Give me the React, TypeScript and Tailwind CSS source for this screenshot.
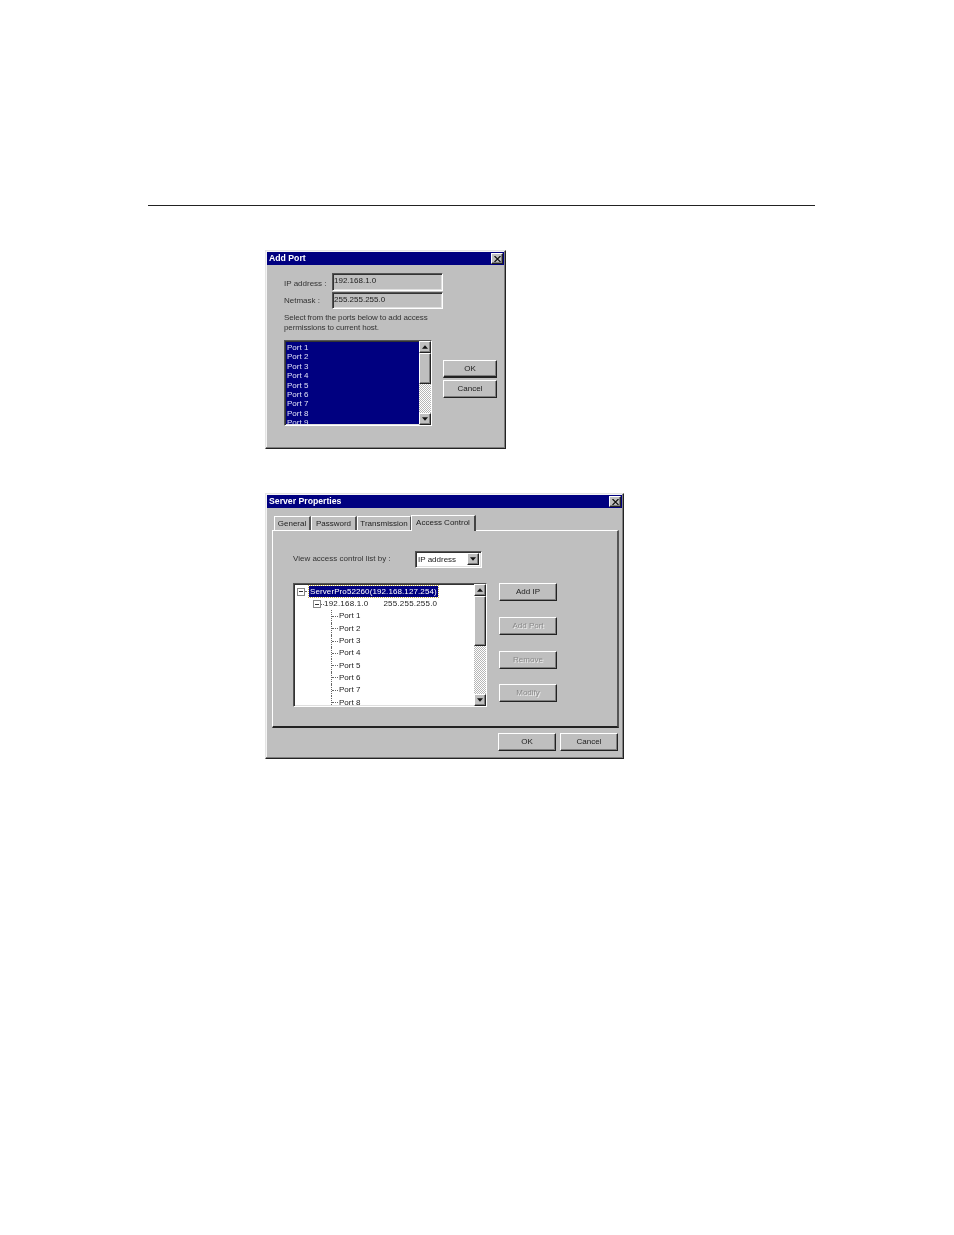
import type { ReactNode } from "react";

const raised = "border border-t-white border-l-white border-r-[#222] border-b-[#222] shadow-[inset_-1px_-1px_0_#7f7f7f]";
const sunken = "border border-t-[#555] border-l-[#555] border-r-white border-b-white shadow-[inset_1px_1px_0_#333,inset_-1px_-1px_0_#dfdfdf]";
const dither = "bg-[repeating-conic-gradient(#ffffff_0_25%,#b5b5b5_0_50%)] bg-[length:2px_2px]";
const tab = "flex items-center justify-center border-t border-l border-t-white border-l-white";

const Btn = ({ label, className = "", disabled = false, strong = false }: { label: string; className?: string; disabled?: boolean; strong?: boolean }) => (
  <div
    className={`flex items-center justify-center bg-[#bfbfbf] ${raised} ${strong ? "border-[#111] border-t-[#111] border-l-[#111] border-b-2" : ""} ${
      disabled ? "text-[#8a8a8a] [text-shadow:1px_1px_0_#eee]" : "text-[#222]"
    } ${className}`}
  >
    {label}
  </div>
);

const Arrow = ({ up = false }: { up?: boolean }) => (
  <div className={`flex h-[12px] w-[12px] shrink-0 items-center justify-center bg-[#bfbfbf] ${raised}`}>
    <svg width="6" height="4" viewBox="0 0 7 4">
      <path d={up ? "M3.5 0L7 4H0Z" : "M0 0H7L3.5 4Z"} fill="#111" />
    </svg>
  </div>
);

const Scrollbar = ({ thumb }: { thumb: string }) => (
  <div className={`flex h-full w-[12px] shrink-0 flex-col ${dither}`}>
    <Arrow up />
    <div className={`w-[12px] bg-[#bfbfbf] ${raised} ${thumb}`} />
    <div className="flex-1" />
    <Arrow />
  </div>
);

const Window = ({ title, className, children }: { title: string; className: string; children: ReactNode }) => (
  <div className={`ml-[265px] flex flex-col border border-t-[#e4e4e4] border-l-[#e4e4e4] border-r-[#222] border-b-[#222] bg-[#bfbfbf] p-px shadow-[inset_-1px_-1px_0_#7f7f7f,inset_1px_1px_0_#f4f4f4] ${className}`}>
    <div className="flex h-[13px] shrink-0 items-center justify-between bg-[#000080] pl-[2px] pr-[1px] text-[8.7px] font-bold text-white">
      <span className="pt-px">{title}</span>
      <div className={`flex h-[11px] w-[12px] items-center justify-center bg-[#bfbfbf] ${raised}`}>
        <svg width="7" height="6" viewBox="0 0 7 6">
          <path d="M0.5 0L6.5 6M6.5 0L0.5 6" stroke="#111" strokeWidth="1.2" />
        </svg>
      </div>
    </div>
    {children}
  </div>
);

const Field = ({ value, className }: { value: string; className: string }) => (
  <div className={`w-[111px] pl-px pt-px text-[#222] ${sunken} ${className}`}>{value}</div>
);

const Expander = () => (
  <div className="flex h-[8px] w-[8px] shrink-0 items-center justify-center border border-[#888] bg-white">
    <div className="h-px w-[4px] bg-[#333]" />
  </div>
);

const PortRow = ({ n }: { n: number }) => (
  <div className="flex h-[12.3px] items-center pl-[34px]">
    <div className="h-full w-px border-l border-dotted border-[#666]" />
    <div className="w-[6px] border-t border-dotted border-[#666]" />
    <span className="ml-px text-[#222]">Port {n}</span>
  </div>
);

export default function App() {
  const listPorts = [1, 2, 3, 4, 5, 6, 7, 8, 9];
  const treePorts = [1, 2, 3, 4, 5, 6, 7, 8];

  return (
    <div className="h-[1235px] w-[954px] overflow-hidden bg-white pt-[205px] font-['Liberation_Sans',Arial,sans-serif] text-[8px] blur-[0.35px]">
      <div className="ml-[148px] h-px w-[667px] bg-[#222]" />

      <Window title="Add Port" className="mt-[44px] h-[199px] w-[241px]">
        <div className="pl-[17px] pt-[8px]">
          <div className="flex">
            <div className="w-[48px] pt-[5px] leading-[12px] text-[#333]">IP address :</div>
            <Field value="192.168.1.0" className="h-[18px] leading-[12px]" />
          </div>
          <div className="mt-px flex">
            <div className="w-[48px] pt-[3px] leading-[12px] text-[#333]">Netmask :</div>
            <Field value="255.255.255.0" className="h-[17px] leading-[12px]" />
          </div>
          <p className="mt-[4px] leading-[10px] tracking-[-0.12px] text-[#333]">
            Select from the ports below to add access
            <br />
            permissions to current host.
          </p>
          <div className="mt-[7px] flex">
            <div className={`flex h-[86px] w-[148px] overflow-hidden bg-[#000080] ${sunken}`}>
              <div className="flex-1 pl-[2px] pt-[2px]">
                {listPorts.map((n) => (
                  <div key={n} className="h-[9.4px] leading-[10px] text-[#dfe0f5]">
                    Port {n}
                  </div>
                ))}
              </div>
              <Scrollbar thumb="h-[31px]" />
            </div>
            <div className="ml-[11px] mt-[20px] flex w-[54px] flex-col gap-[2px]">
              <Btn label="OK" strong className="h-[18px]" />
              <Btn label="Cancel" className="h-[18px]" />
            </div>
          </div>
        </div>
      </Window>

      <Window title="Server Properties" className="mt-[44px] h-[266px] w-[359px]">
        <div className="flex h-[22px] items-end pl-[7px] text-[#222]">
          <div className={`${tab} h-[14px] w-[37px] border-r-2 border-r-[#555]`}>General</div>
          <div className={`${tab} h-[14px] w-[46px] border-r-2 border-r-[#555]`}>Password</div>
          <div className={`${tab} h-[14px] w-[54px] border-r border-r-[#555]`}>Transmission</div>
          <div className={`${tab} z-10 -mb-px h-[16px] w-[65px] border-r-2 border-r-[#444] bg-[#bfbfbf] pb-[2px]`}>Access Control</div>
        </div>
        <div className="ml-[5px] flex h-[198px] w-[347px] flex-col border-t border-l border-r-2 border-b-2 border-t-white border-l-white border-r-[#555] border-b-[#222] pl-[20px]">
          <div className="mt-[19px] flex h-[18px] items-center">
            <div className="w-[122px] text-[#333]">View access control list by :</div>
            <div className={`flex h-[17px] w-[67px] items-center justify-between bg-white pl-[2px] pr-[2px] text-[#222] ${sunken}`}>
              <span className="pt-px">IP address</span>
              <Arrow />
            </div>
          </div>
          <div className="mt-[15px] flex">
            <div className={`flex h-[124px] w-[194px] overflow-hidden bg-white ${sunken}`}>
              <div className="flex-1 overflow-hidden pl-[3px] pt-px">
                <div className="flex h-[13px] items-center">
                  <Expander />
                  <div className="w-[4px] border-t border-dotted border-[#666]" />
                  <span className="bg-[#000080] px-px leading-[11px] tracking-[0.1px] text-white outline-1 outline-dotted outline-[#c9b34a]">ServerPro52260(192.168.127.254)</span>
                </div>
                <div className="flex h-[12.3px] items-center pl-[16px]">
                  <Expander />
                  <div className="w-[3px] border-t border-dotted border-[#666]" />
                  <span className="tracking-[0.2px] text-[#222]">192.168.1.0</span>
                  <span className="ml-[15px] tracking-[0.2px] text-[#222]">255.255.255.0</span>
                </div>
                {treePorts.map((n) => (
                  <PortRow key={n} n={n} />
                ))}
              </div>
              <Scrollbar thumb="h-[50px]" />
            </div>
            <div className="ml-[12px] flex w-[58px] flex-col">
              <Btn label="Add IP" className="h-[18px]" />
              <Btn label="Add Port" disabled className="mt-[16px] h-[18px]" />
              <Btn label="Remove" disabled className="mt-[16px] h-[18px]" />
              <Btn label="Modify" disabled className="mt-[15px] h-[18px]" />
            </div>
          </div>
        </div>
        <div className="ml-[231px] mt-[5px] flex gap-[4px]">
          <Btn label="OK" className="h-[18px] w-[58px]" />
          <Btn label="Cancel" className="h-[18px] w-[58px]" />
        </div>
      </Window>
    </div>
  );
}
